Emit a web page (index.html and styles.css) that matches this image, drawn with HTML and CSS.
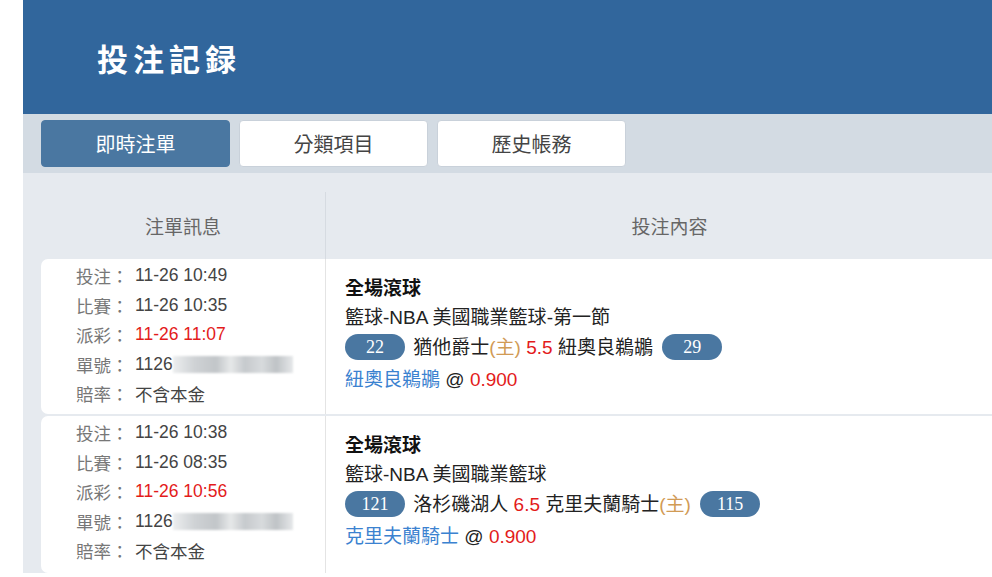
FILE: index.html
```html
<!DOCTYPE html>
<html lang="zh-Hant">
<head>
    <meta charset="UTF-8">
    <meta name="viewport" content="width=device-width, initial-scale=1.0">
    <title>投注記録</title>
    <link rel="stylesheet" href="styles.css">
</head>
<body>
<div class="page">
    <header class="topbar">
        <h1>投注記録</h1>
    </header>

    <nav class="tabs">
        <button class="tab active">即時注單</button>
        <button class="tab">分類項目</button>
        <button class="tab">歷史帳務</button>
    </nav>

    <section class="records">
        <div class="table">
            <div class="thead">
                <div class="col-info">注單訊息</div>
                <div class="col-content">投注內容</div>
            </div>

            <!-- row 1 -->
            <div class="row">
                <div class="col-info">
                    <p><span class="label">投注：</span><span class="val">11-26 10:49</span></p>
                    <p><span class="label">比賽：</span><span class="val">11-26 10:35</span></p>
                    <p><span class="label">派彩：</span><span class="val red">11-26 11:07</span></p>
                    <p><span class="label">單號：</span><span class="val">1126</span><span class="blur"></span></p>
                    <p><span class="label">賠率：</span><span class="val">不含本金</span></p>
                </div>
                <div class="col-content">
                    <p class="type">全場滾球</p>
                    <p>籃球-NBA 美國職業籃球-第一節</p>
                    <p class="match"><span class="score first">22</span> 猶他爵士<span class="home">(主)</span> <span class="red">5.5</span> 紐奧良鵜鶘 <span class="score">29</span></p>
                    <p><span class="pick">紐奧良鵜鶘</span> @ <span class="red">0.900</span></p>
                </div>
            </div>

            <!-- row 2 -->
            <div class="row">
                <div class="col-info">
                    <p><span class="label">投注：</span><span class="val">11-26 10:38</span></p>
                    <p><span class="label">比賽：</span><span class="val">11-26 08:35</span></p>
                    <p><span class="label">派彩：</span><span class="val red">11-26 10:56</span></p>
                    <p><span class="label">單號：</span><span class="val">1126</span><span class="blur"></span></p>
                    <p><span class="label">賠率：</span><span class="val">不含本金</span></p>
                </div>
                <div class="col-content">
                    <p class="type">全場滾球</p>
                    <p>籃球-NBA 美國職業籃球</p>
                    <p class="match"><span class="score first">121</span> 洛杉磯湖人 <span class="red">6.5</span> 克里夫蘭騎士<span class="home">(主)</span> <span class="score">115</span></p>
                    <p><span class="pick">克里夫蘭騎士</span> @ <span class="red">0.900</span></p>
                </div>
            </div>
        </div>
    </section>
</div>
</body>
</html>
```

FILE: styles.css
```css
* {
    margin: 0; padding: 0; box-sizing: border-box;
}

body {
    font-family: "Liberation Sans", Arial, "Noto Sans CJK TC", sans-serif;
    background: #fff;
    overflow: hidden;
}

.page {
    margin-left: 23px;
    width: 990px;
}

.topbar {
    height: 114px;
    background-color: #31669c;
    display: flex;
    align-items: center;
    padding-left: 74px;
}

.topbar h1 {
    color: #fff;
    font-family: "Noto Sans CJK TC", serif;
    font-size: 31px;
    font-weight: 700;
    letter-spacing: 5px;
}

.tabs {
    height: 59px;
    background-color: #d3dbe3;
    display: flex;
    align-items: center;
    gap: 9px;
    padding: 0 18px;
}

.tab {
    width: 189px;
    height: 47px;
    border: 1px solid #c9d1da;
    border-radius: 4px;
    background-color: #fff;
    color: #444;
    font-family: inherit;
    font-size: 20px;
}

.tab.active {
    background-color: #4a77a1;
    border-color: #4a77a1;
    color: #fff;
}

.records {
    background-color: #e6eaef;
    padding: 19px 0 0 18px;
}

.table {
    width: 972px;
}

.thead, .row {
    display: grid;
    grid-template-columns: 285px 1fr;
}

.thead > div {
    height: 67px;
    display: flex;
    align-items: center;
    justify-content: center;
    color: #666;
    font-size: 19px;
}

.thead .col-info {
    border-right: 1px solid #d6dbe1;
}

.row {
    background-color: #fff;
    border-radius: 7px 0 0 7px;
    margin-bottom: 2px;
    height: 155px;
}

.row + .row {
    height: 157px;
}

.row .col-info {
    border-right: 1px solid #e4e4e4;
    padding: 2px 0 0 35px;
    font-size: 17.5px;
}

.row .col-info p {
    height: 29.5px;
    display: flex;
    align-items: center;
}

.label {
    color: #777;
    width: 59px;
}

.val {
    color: #444;
}

.blur {
    display: inline-block;
    width: 120px;
    height: 17px;
    background: linear-gradient(90deg, #eceeef 0%, #cfd2d5 18%, #c2c6c9 36%, #e6e8e9 48%, #c6cacd 60%, #d8dbdd 74%, #bfc3c6 86%, #e6e8ea 100%);
    filter: blur(0.8px);
}

.red {
    color: #e31b1b;
}

.row .col-content {
    padding: 15px 0 0 19px;
    font-size: 19px;
    color: #222;
}

.col-content p {
    height: 29px;
    line-height: 29px;
    white-space: nowrap;
}

.col-content .type {
    font-weight: 700;
    color: #111;
}

.col-content .match {
    height: 33px;
    line-height: 32px;
}

.score {
    display: inline-block;
    vertical-align: middle;
    width: 60px;
    height: 26px;
    line-height: 27px;
    margin: -3px 0 0 4px;
    border-radius: 13px;
    background-color: #4a77a1;
    color: #fff;
    text-align: center;
    font-family: "Liberation Serif", serif;
    font-size: 18px;
}

.score.first {
    margin: -3px 3px 0 0;
}

.home {
    color: #d19b55;
}

.pick {
    color: #3b82d0;
}
```
